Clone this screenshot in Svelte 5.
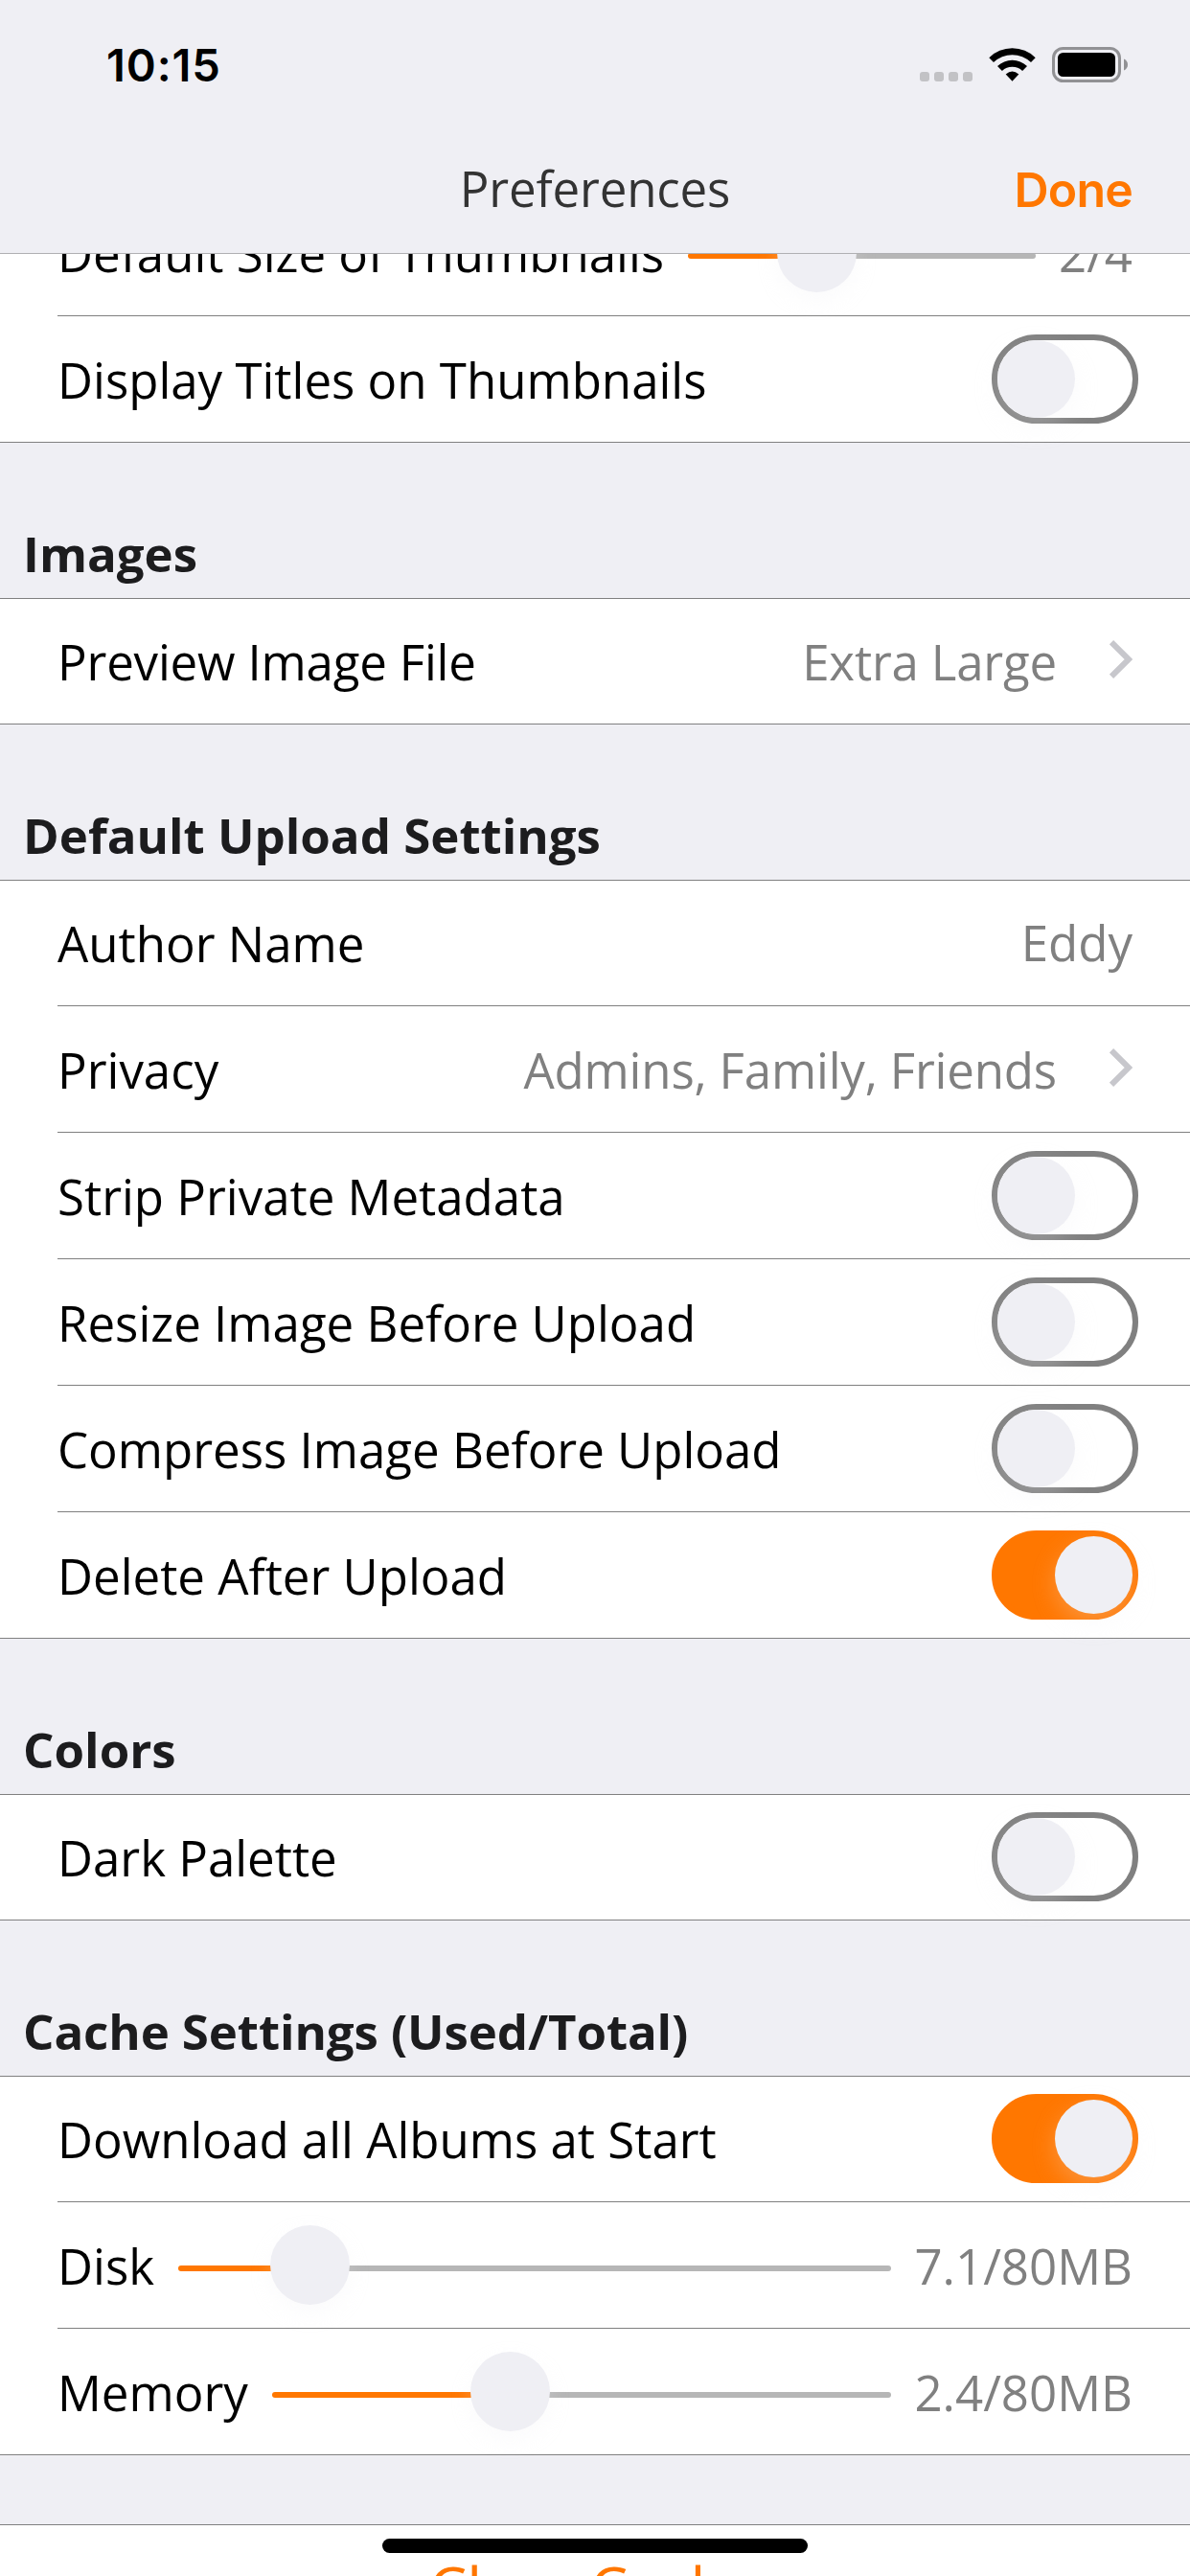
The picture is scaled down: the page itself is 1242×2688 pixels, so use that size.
<script>
  const groups = [
    {
      title: null,
      rows: [
        { label: 'Default Size of Thumbnails', slider: 0.333, value: '2/4' },
        { label: 'Display Titles on Thumbnails', on: false }
      ]
    },
    { title: 'Images', rows: [{ label: 'Preview Image File', value: 'Extra Large', link: true, tight: true }] },
    {
      title: 'Default Upload Settings',
      rows: [
        { label: 'Author Name', value: 'Eddy', field: true },
        { label: 'Privacy', value: 'Admins, Family, Friends', link: true },
        { label: 'Strip Private Metadata', on: false },
        { label: 'Resize Image Before Upload', on: false },
        { label: 'Compress Image Before Upload', on: false },
        { label: 'Delete After Upload', on: true }
      ]
    },
    { title: 'Colors', rows: [{ label: 'Dark Palette', on: false }] },
    {
      title: 'Cache Settings (Used/Total)',
      tight: true,
      rows: [
        { label: 'Download all Albums at Start', on: true },
        { label: 'Disk', slider: 0.1445, value: '7.1/80MB' },
        { label: 'Memory', slider: 0.367, value: '2.4/80MB' }
      ]
    }
  ];
</script>

<div class="screen">
  <header>
    <div class="status">
      <span class="time">10:15</span>
      <div class="indicators">
        <div class="signal"><i></i><i></i><i></i><i></i></div>
        <svg class="wifi" width="49" height="36" viewBox="0 0 49 36">
          <path d="M0.3 11.200a34.500 34.500 0 0 1 48.400 0l-4.700 4.900a28 28 0 0 0-39 0z" />
          <path d="M9 20a22.500 22.500 0 0 1 31 0l-4.900 5a15.500 15.500 0 0 0-21.200 0z" />
          <path d="M17.700 28.600q6.800-6.400 13.600 0l-6.800 7.100z" />
        </svg>
        <svg class="battery" width="80" height="37" viewBox="0 0 80 37">
          <rect x="1.5" y="1.5" width="69" height="34" rx="10" fill="none" stroke="#919194" stroke-width="3" />
          <rect x="6" y="6" width="60" height="25" rx="5.5" />
          <path d="M75 12.500c2.600 1 4 3.400 4 6s-1.400 5-4 6z" fill="#919194" />
        </svg>
      </div>
    </div>
    <div class="nav">
      <span></span>
      <h1>Preferences</h1>
      <button>Done</button>
    </div>
  </header>

  <main>
    {#each groups as group}
      <section>
        {#if group.title}<h2 class:tight={group.tight}>{group.title}</h2>{/if}
        <ul>
          {#each group.rows as row}
            <li>
              <span class="label" class:tight={row.tight}>{row.label}</span>
              {#if row.slider !== undefined}
                <div class="slider">
                  <div class="track" style="--p: {row.slider}"></div>
                  <div class="thumb" style="--p: {row.slider}"></div>
                </div>
              {/if}
              {#if row.value}
                <span class="value" class:field={row.field} class:tight={row.link}>{row.value}</span>
              {/if}
              {#if row.link}
                <svg class="chevron" width="24" height="40" viewBox="0 0 24 40">
                  <path d="M2 2.200L20 20L2 37.800" />
                </svg>
              {/if}
              {#if row.on !== undefined}
                <div class="switch" class:on={row.on}><i></i></div>
              {/if}
            </li>
          {/each}
        </ul>
      </section>
    {/each}
    <section class="action">
      <button>Clear Cache</button>
    </section>
  </main>
  <div class="home"></div>
</div>

<style>
  :global(body) {
    background: #efeff4;
  }
  .screen {
    position: relative;
    width: 1242px;
    height: 2688px;
    overflow: hidden;
    display: flex;
    flex-direction: column;
    background: #efeff4;
    color: #000;
    font: 51px/131px 'Open Sans', 'Noto Sans', sans-serif;
  }
  header {
    position: relative;
    z-index: 1;
    flex: none;
    box-sizing: border-box;
    height: 265px;
    background: #efeff4;
    border-bottom: 1px solid #b0b0b3;
  }
  .status {
    height: 132px;
    display: flex;
    justify-content: space-between;
    padding: 0 64px 0 111px;
  }
  .time {
    font: 600 47px/136px Inter, sans-serif;
    letter-spacing: 0.9px;
  }
  .indicators {
    display: flex;
    align-items: flex-start;
    padding-top: 49px;
  }
  .signal {
    display: flex;
    gap: 5px;
    margin: 26px 17px 0 0;
  }
  .signal i {
    width: 10px;
    height: 10px;
    border-radius: 3px;
    background: #c2c2c5;
  }
  .wifi {
    margin-right: 17px;
  }
  .nav {
    height: 132px;
    display: grid;
    grid-template-columns: 1fr auto 1fr;
    padding: 0 60px;
  }
  h1 {
    margin: 0;
    font-size: 51px;
    font-weight: 400;
    line-height: 129px;
    letter-spacing: -0.15px;
    color: #333;
  }
  button {
    border: 0;
    padding: 0;
    background: none;
    color: #ff7700;
    font: inherit;
  }
  .nav button {
    justify-self: end;
    font: 600 50px/132px Inter, sans-serif;
    letter-spacing: -0.8px;
  }
  main {
    flex: none;
    margin-top: -67px;
  }
  h2 {
    box-sizing: border-box;
    height: 162px;
    margin: 0;
    padding: 80px 24px 0;
    font-size: 51px;
    font-weight: 700;
    line-height: 70px;
    color: #1c1c1e;
  }
  ul {
    margin: 0;
    padding: 0 0 0 60px;
    list-style: none;
    background: #fff;
    border-bottom: 1px solid #808080;
    box-shadow: inset 0 1px #808080;
  }
  li {
    display: flex;
    align-items: center;
    height: 131px;
    padding-right: 60px;
    border-bottom: 1px solid #808080;
  }
  li:last-child {
    border-bottom: 0;
  }
  .label,
  .value {
    padding-top: 2px;
    white-space: nowrap;
  }
  .value {
    margin-left: auto;
    color: #808080;
  }
  .field {
    padding-top: 0;
  }
  .tight {
    letter-spacing: -0.18px;
  }
  h2.tight {
    letter-spacing: -0.1px;
  }
  .chevron {
    margin: 0 0 3px 55px;
    fill: none;
    stroke: #c7c7cc;
    stroke-width: 6;
  }
  .switch {
    box-sizing: border-box;
    display: flex;
    width: 153px;
    height: 93px;
    margin: 0 -6px 0 auto;
    border: 6px solid #808080;
    border-radius: 47px;
  }
  .switch i {
    width: 81px;
    height: 81px;
    border-radius: 50%;
    background: #efeff4;
    box-shadow: 0 9px 24px rgba(239, 239, 244, 0.25);
  }
  .switch.on {
    justify-content: flex-end;
    border-color: #ff7700;
    background: #ff7700;
  }
  .slider {
    flex: 1;
    display: grid;
    align-items: center;
    margin: 0 24px 0 25px;
  }
  .slider > div {
    grid-area: 1 / 1;
  }
  .track {
    height: 6px;
    margin-top: 7px;
    border-radius: 3px;
    background: linear-gradient(#ff7700, #ff7700) 0 0 / calc(var(--p) * (100% - 84px) + 42px) 100% no-repeat #b6b6b6;
  }
  .thumb {
    width: 83px;
    height: 83px;
    margin-left: calc(var(--p) * (100% - 83px));
    border-radius: 50%;
    background: #efeff4;
    box-shadow: 0 9px 20px rgba(239, 239, 244, 0.25);
  }
  .action {
    margin-top: 72px;
    height: 132px;
    display: flex;
    justify-content: center;
    background: #fff;
    box-shadow: inset 0 1px #808080;
  }
  .action button {
    font-size: 63px;
    line-height: 132px;
  }
  .home {
    position: absolute;
    z-index: 2;
    left: 399px;
    bottom: 24px;
    width: 444px;
    height: 15px;
    border-radius: 8px;
    background: #000;
  }
</style>
